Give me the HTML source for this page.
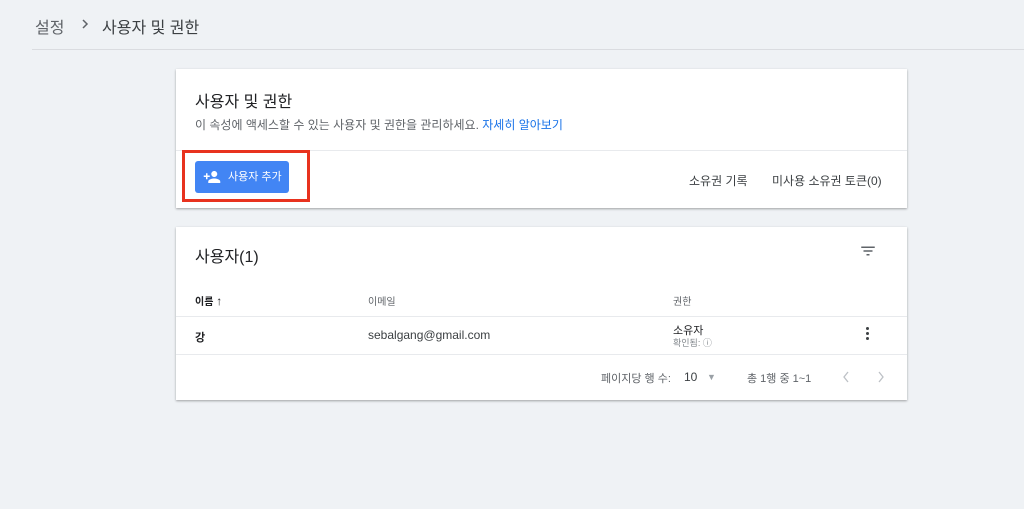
<!DOCTYPE html>
<html><head><meta charset="utf-8"><style>
*{margin:0;padding:0;box-sizing:border-box}
body{width:1024px;height:509px;background:#eff2f5;font-family:"Liberation Sans","Noto Sans CJK KR",sans-serif;color:#202124;position:relative;overflow:hidden}
.a{position:absolute;white-space:nowrap}
.card{position:absolute;left:176px;width:731px;background:#fff;box-shadow:0 1px 2px rgba(0,0,0,.25),0 1px 3px rgba(0,0,0,.1)}
</style></head><body>
<div class="a" style="left:35px;top:14px;font-size:16px;color:#5f6368">설정</div>
<svg class="a" style="left:80px;top:18px" width="10" height="12" viewBox="0 0 10 12"><path d="M3 2l4 4-4 4" fill="none" stroke="#5f6368" stroke-width="1.5"/></svg>
<div class="a" style="left:102px;top:14px;font-size:16px;color:#3c4043">사용자 및 권한</div>
<div class="a" style="left:32px;top:49px;width:992px;height:1px;background:#dadce0"></div>

<div class="card" style="top:69px;height:139px">
 <div class="a" style="left:19px;top:19px;font-size:16px">사용자 및 권한</div>
 <div class="a" style="left:19px;top:47px;font-size:12px;color:#5f6368">이 속성에 액세스할 수 있는 사용자 및 권한을 관리하세요. <span style="color:#1a73e8">자세히 알아보기</span></div>
 <div class="a" style="left:0;top:81px;width:731px;height:1px;background:#e8eaed"></div>
 <div class="a" style="left:6px;top:81px;width:128px;height:52px;border:3px solid #e8321e"></div>
 <div class="a" style="left:19px;top:92px;width:94px;height:32px;background:#4285f4;border-radius:3px;color:#fff;font-size:11px;line-height:32px;padding-left:33px">사용자 추가</div>
 <svg class="a" style="left:26px;top:99px" width="20" height="18" viewBox="0 0 24 24"><path fill="#fff" d="M15 12c2.2 0 4-1.8 4-4s-1.8-4-4-4-4 1.8-4 4 1.8 4 4 4zm-9-2V7H4v3H1v2h3v3h2v-3h3v-2H6zm9 4c-2.7 0-8 1.3-8 4v2h16v-2c0-2.7-5.3-4-8-4z"/></svg>
 <div class="a" style="left:513px;top:103px;font-size:12px;color:#3c4043">소유권 기록</div>
 <div class="a" style="left:596px;top:103px;font-size:12px;color:#3c4043">미사용 소유권 토큰(0)</div>
</div>

<div class="card" style="top:227px;height:173px">
 <div class="a" style="left:19px;top:16px;font-size:16px">사용자(1)</div>
 <svg class="a" style="left:683px;top:15px" width="18" height="18" viewBox="0 0 24 24"><path fill="#5f6368" d="M10 18h4v-2h-4v2zM3 6v2h18V6H3zm3 7h12v-2H6v2z"/></svg>
 <div class="a" style="left:19px;top:66px;font-size:10px;font-weight:bold">이름 <span style="font-size:12px">↑</span></div>
 <div class="a" style="left:192px;top:66px;font-size:10px;color:#5f6368">이메일</div>
 <div class="a" style="left:497px;top:66px;font-size:10px;color:#5f6368">권한</div>
 <div class="a" style="left:0;top:89px;width:731px;height:1px;background:#e8eaed"></div>
 <div class="a" style="left:19px;top:102px;font-size:11px;font-weight:bold">강</div>
 <div class="a" style="left:192px;top:101px;font-size:12px;color:#3c4043">sebalgang@gmail.com</div>
 <div class="a" style="left:497px;top:95px;font-size:11px">소유자</div>
 <div class="a" style="left:497px;top:109px;font-size:9px;color:#80868b">확인됨: ⓘ</div>
 <div class="a" style="left:690px;top:100px;width:3px">
  <div style="width:3px;height:3px;border-radius:50%;background:#3c4043;margin-bottom:2px"></div>
  <div style="width:3px;height:3px;border-radius:50%;background:#3c4043;margin-bottom:2px"></div>
  <div style="width:3px;height:3px;border-radius:50%;background:#3c4043"></div></div>
 <div class="a" style="left:0;top:127px;width:731px;height:1px;background:#e8eaed"></div>
 <div class="a" style="left:425px;top:143px;font-size:11px;color:#5f6368">페이지당 행 수:</div>
 <div class="a" style="left:508px;top:143px;font-size:12px;color:#3c4043">10</div>
 <div class="a" style="left:531px;top:145px;font-size:9px;color:#9aa0a6">▼</div>
 <div class="a" style="left:571px;top:143px;font-size:11px;color:#5f6368">총 1행 중 1~1</div>
 <svg class="a" style="left:665px;top:143px" width="10" height="14" viewBox="0 0 10 14"><path d="M7 2L3 7l4 5" fill="none" stroke="#bdc1c6" stroke-width="1.3"/></svg>
 <svg class="a" style="left:700px;top:143px" width="10" height="14" viewBox="0 0 10 14"><path d="M3 2l4 5-4 5" fill="none" stroke="#bdc1c6" stroke-width="1.3"/></svg>
</div>
</body></html>
